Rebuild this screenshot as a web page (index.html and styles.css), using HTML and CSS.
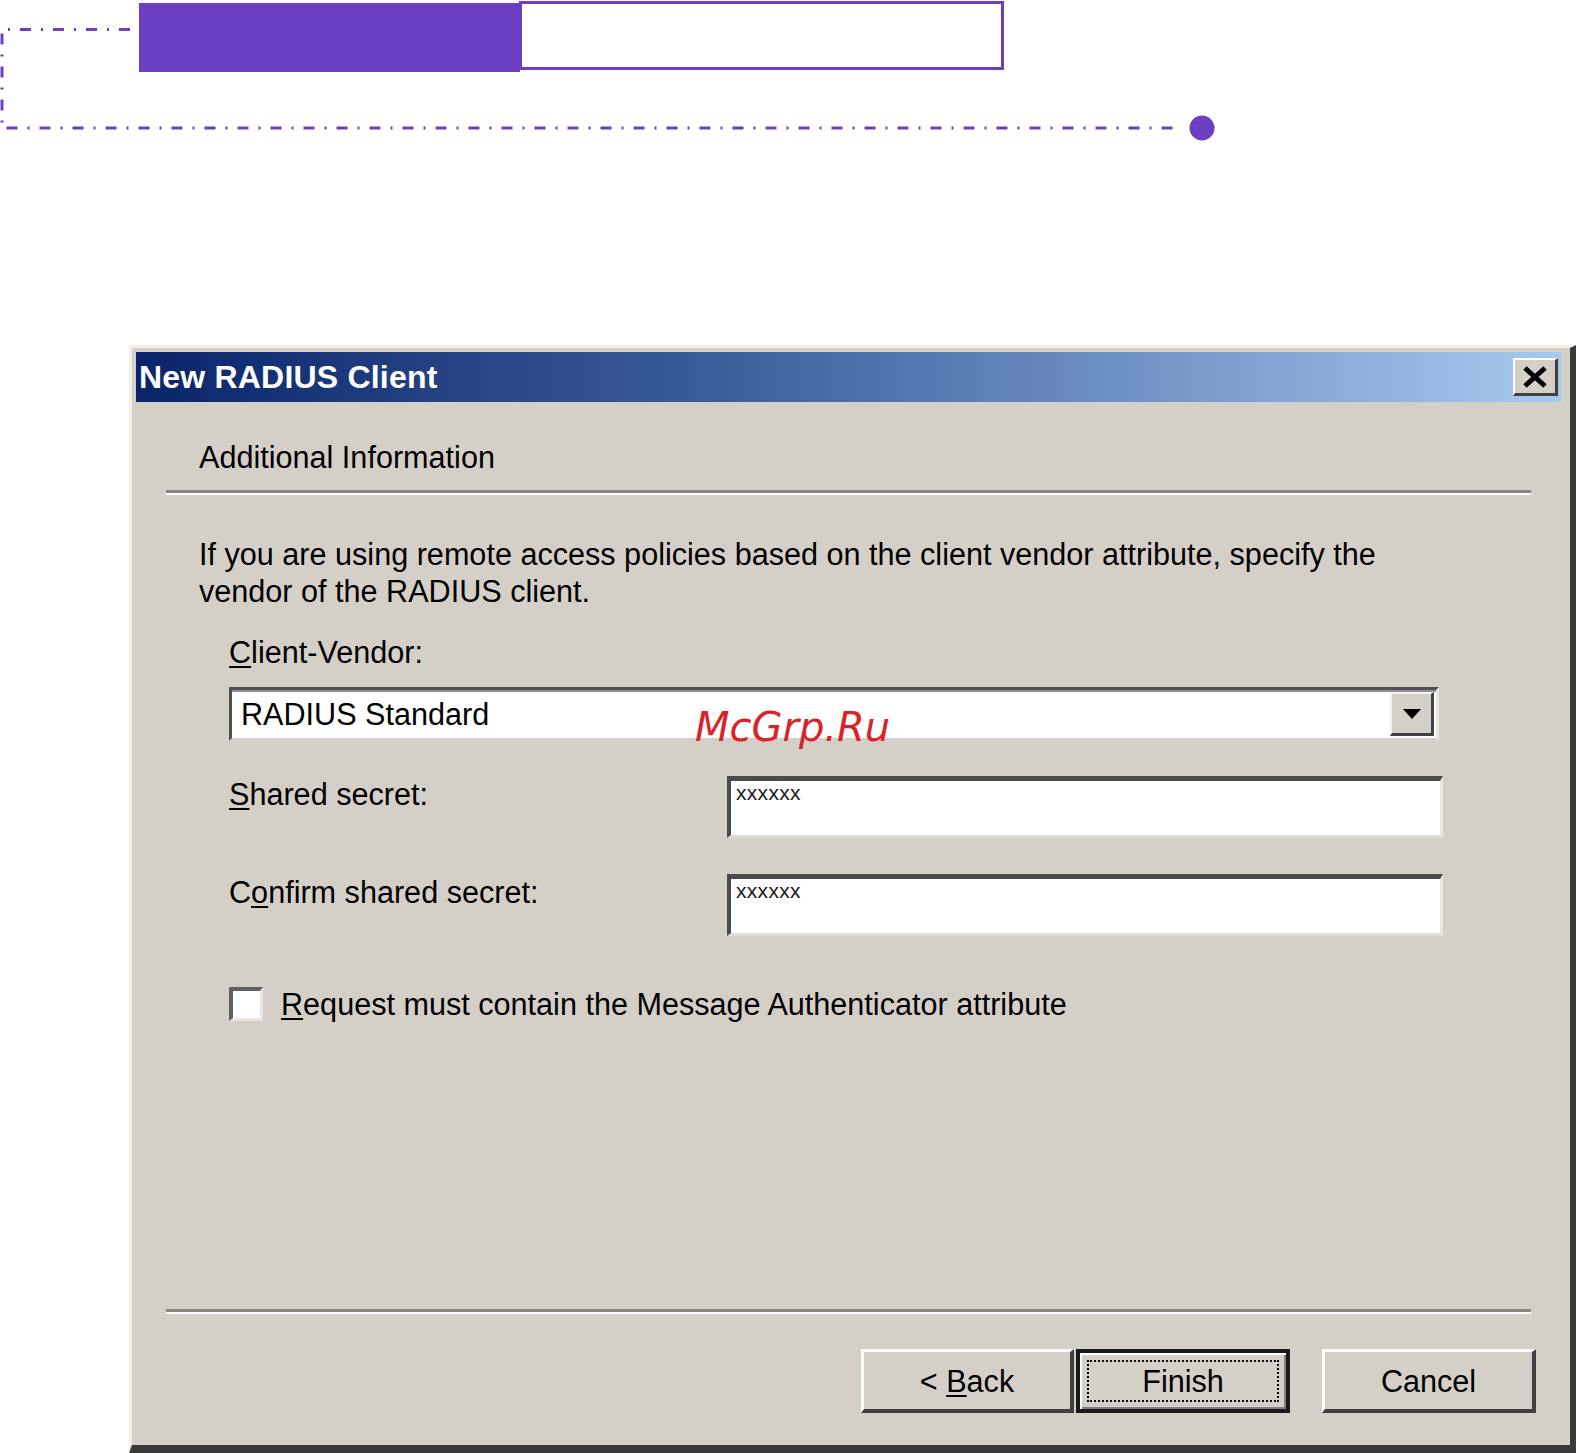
FILE: index.html
```html
<!DOCTYPE html>
<html lang="en">
<head>
<meta charset="utf-8">
<title>New RADIUS Client</title>
<link rel="stylesheet" href="styles.css">
</head>
<body>
<svg class="deco" width="1230" height="145" viewBox="0 0 1230 145" aria-hidden="true">
  <path d="M130 29.5 H2 V128 H1182" fill="none" stroke="#6b3fc2" stroke-width="3" stroke-dasharray="11 10 2 10"/>
  <rect x="139" y="3" width="381" height="69" fill="#6b3fc2"/>
  <rect x="520.5" y="2.5" width="482" height="66" fill="#fff" stroke="#6b3fc2" stroke-width="3"/>
  <circle cx="1202" cy="128" r="12.5" fill="#6b3fc2"/>
</svg>

<div class="dialog">
  <div class="titlebar">
    <span class="title">New RADIUS Client</span>
    <span class="close">
      <svg width="26" height="22" viewBox="0 0 26 22"><path d="M3 2 L23 20 M23 2 L3 20" stroke="#000" stroke-width="5"/></svg>
    </span>
  </div>
  <div class="body">
    <div class="header">Additional Information</div>
    <div class="sep"></div>
    <p class="intro">If you are using remote access policies based on the client vendor attribute, specify the<br>vendor of the RADIUS client.</p>
    <div class="label vendor-label"><u>C</u>lient-Vendor:</div>
    <div class="combo">
      <span class="combo-text">RADIUS Standard</span>
      <span class="combo-btn"><svg width="18" height="10" viewBox="0 0 18 10"><path d="M0 0 H18 L9 10 Z" fill="#000"/></svg></span>
    </div>
    <div class="field-row first">
      <div class="label"><u>S</u>hared secret:</div>
      <div class="textbox">xxxxxx</div>
    </div>
    <div class="field-row second">
      <div class="label">C<u>o</u>nfirm shared secret:</div>
      <div class="textbox">xxxxxx</div>
    </div>
    <div class="check-row">
      <span class="checkbox"></span>
      <span class="label"><u>R</u>equest must contain the Message Authenticator attribute</span>
    </div>
    <div class="footer">
      <div class="sep"></div>
      <div class="buttons">
        <span class="btn back"><span class="btn-text">&lt; <u>B</u>ack</span></span>
        <span class="btn default"><span class="focus">Finish</span></span>
        <span class="btn cancel">Cancel</span>
      </div>
    </div>
  </div>
  <div class="watermark">McGrp.Ru</div>
</div>
</body>
</html>
```
FILE: styles.css
```css
html, body {
  margin: 0;
  padding: 0;
  background: #ffffff;
}

body {
  width: 1576px;
  height: 1453px;
  overflow: hidden;
  font-family: "Liberation Sans", Arial, sans-serif;
}

.deco {
  display: block;
}

.dialog {
  position: relative;
  box-sizing: border-box;
  margin: 200px 0 0 129px;
  width: 1447px;
  height: 1108px;
  background: #d4d0c8;
  border-top: 3px solid #f1efe8;
  border-left: 3px solid #f1efe8;
  border-right: 6px solid #3a3a3a;
  border-bottom: 8px solid #3a3a3a;
  padding: 4px 9px 0 4px;
  display: flex;
  flex-direction: column;
  color: #000;
}

.titlebar {
  height: 50px;
  flex: none;
  display: flex;
  align-items: center;
  justify-content: space-between;
  background: linear-gradient(to right, #0a246a 0%, #3a5c9a 40%, #a6caf0 100%);
  padding: 0 3px 0 3px;
}

.title {
  color: #ffffff;
  font-weight: bold;
  font-size: 32px;
  letter-spacing: 0.2px;
}

.close {
  box-sizing: border-box;
  width: 45px;
  height: 38px;
  background: #d4d0c8;
  border-top: 2px solid #ffffff;
  border-left: 2px solid #ffffff;
  border-right: 3px solid #404040;
  border-bottom: 3px solid #404040;
  display: flex;
  align-items: center;
  justify-content: center;
}

.body {
  flex: 1;
  display: flex;
  flex-direction: column;
  font-size: 30.6px;
  line-height: 36px;
}

.header {
  margin: 37px 0 0 63px;
}

.sep {
  margin: 15px 30px 0 30px;
  border-top: 3px solid #8a8782;
  border-bottom: 2px solid #ffffff;
}

.intro {
  margin: 41px 0 0 63px;
  line-height: 37px;
}

.label u {
  text-decoration-thickness: 2px;
  text-underline-offset: 3px;
}

.vendor-label {
  margin: 24px 0 0 93px;
}

.combo {
  box-sizing: border-box;
  margin: 17px 122px 0 93px;
  height: 54px;
  background: #ffffff;
  border-top: 3px solid #505050;
  border-left: 3px solid #505050;
  border-right: 3px solid #e8e6e0;
  border-bottom: 3px solid #d4d0c8;
  box-shadow: inset 0 2px 0 #909090;
  display: flex;
  align-items: center;
  justify-content: space-between;
  padding: 0 2px 0 9px;
}

.combo-btn {
  box-sizing: border-box;
  width: 44px;
  height: 44px;
  background: #d4d0c8;
  border-top: 2px solid #f4f2ee;
  border-left: 2px solid #f4f2ee;
  border-right: 3px solid #404040;
  border-bottom: 3px solid #404040;
  display: flex;
  align-items: center;
  justify-content: center;
}

.field-row {
  display: grid;
  grid-template-columns: 498px 1fr;
  margin: 35px 118px 0 93px;
  align-items: start;
}

.field-row.second {
  margin-top: 36px;
}

.textbox {
  box-sizing: border-box;
  height: 62px;
  background: #ffffff;
  border-top: 5px solid #4a4a4a;
  border-left: 4px solid #4a4a4a;
  border-right: 3px solid #e8e6e0;
  border-bottom: 3px solid #e0ddd6;
  padding: 1px 5px;
  font-size: 21px;
  line-height: 22px;
  color: #1a1a1a;
  letter-spacing: 0.3px;
}

.check-row {
  display: flex;
  align-items: center;
  gap: 18px;
  margin: 50px 0 0 93px;
}

.checkbox {
  box-sizing: border-box;
  width: 34px;
  height: 34px;
  background: #ffffff;
  border-top: 4px solid #606060;
  border-left: 4px solid #606060;
  border-right: 3px solid #e8e6e0;
  border-bottom: 3px solid #e8e6e0;
}

.footer {
  margin-top: auto;
  padding-bottom: 32px;
}

.footer .sep {
  margin-top: 0;
}

.buttons {
  display: flex;
  justify-content: flex-end;
  margin: 35px 25px 0 0;
}

.btn {
  box-sizing: border-box;
  width: 214px;
  height: 64px;
  display: flex;
  align-items: center;
  justify-content: center;
  background: #d4d0c8;
  border-top: 3px solid #ffffff;
  border-left: 3px solid #ffffff;
  border-right: 4px solid #404040;
  border-bottom: 4px solid #404040;
}

.btn u {
  text-decoration-thickness: 2px;
  text-underline-offset: 3px;
}

.btn-text {
  white-space: pre;
}

.btn.back {
  width: 213px;
  margin-right: 2px;
}

.btn.default {
  border: 4px solid #1a1a1a;
  box-shadow: inset 2px 2px 0 #ffffff, inset -2px -2px 0 #808080;
  padding: 7px;
  margin-right: 32px;
}

.focus {
  box-sizing: border-box;
  width: 100%;
  height: 100%;
  display: flex;
  align-items: center;
  justify-content: center;
  border: 2px dotted #000;
}

.watermark {
  position: absolute;
  left: 563px;
  top: 355px;
  font-family: "DejaVu Sans", sans-serif;
  font-style: italic;
  font-size: 40px;
  line-height: 48px;
  color: #d9232a;
}
```
